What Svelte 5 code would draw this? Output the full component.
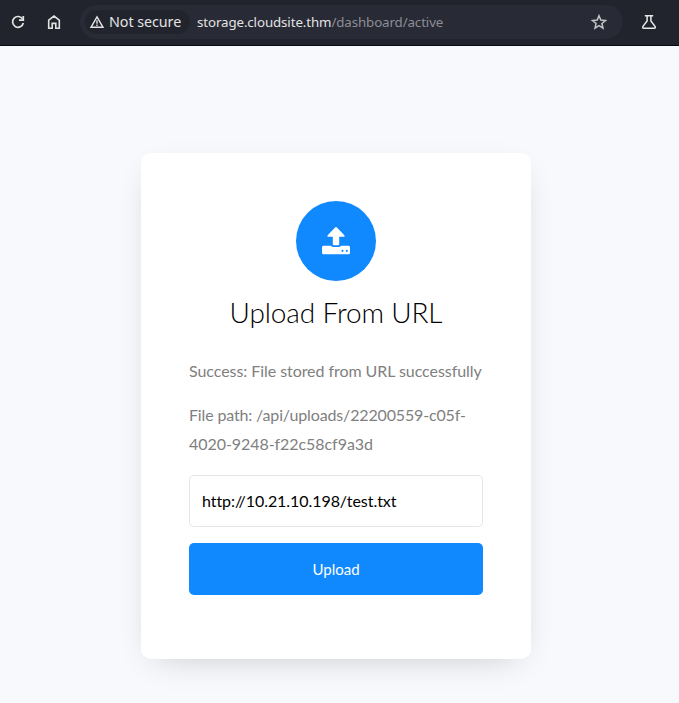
<script>
  let url = $state('http://10.21.10.198/test.txt');
</script>

<div class="page">
  <header class="toolbar">
    <svg class="reload" width="18" height="18" viewBox="0 0 18 18" fill="none" stroke="#e3e3e3" stroke-width="1.7">
      <path d="M13.7 6.2A5.4 5.4 0 1 0 14.3 10" /><path d="M14.3 3v4.2H10" />
    </svg>
    <svg class="home" width="18" height="18" viewBox="0 0 18 18" fill="none" stroke="#e3e3e3" stroke-width="1.6">
      <path d="M3.7 7.1 9 3l5.3 4.1v8.1h-3.5v-4.8H7.2v4.8H3.7z" />
    </svg>
    <div class="omnibox">
      <div class="chip">
        <svg width="16" height="16" viewBox="0 0 16 16" fill="none" stroke="#e3e3e3" stroke-width="1.4">
          <path d="M8 2.8 14 13.3H2z" /><path d="M8 6.3v3.4M8 10.6v1.4" />
        </svg>
        <span>Not secure</span>
      </div>
      <div class="address"><span class="host">storage.cloudsite.thm</span><span class="path">/dashboard/active</span></div>
      <svg class="star" width="18" height="18" viewBox="0 0 18 18" fill="none" stroke="#c4c5c8" stroke-width="1.5">
        <path d="m9 2.8 1.8 4.3 4.7.4-3.6 3 1.1 4.6L9 12.7l-4 2.4 1.1-4.6-3.6-3 4.7-.4z" />
      </svg>
    </div>
    <svg class="flask" width="18" height="18" viewBox="0 0 18 18" fill="none" stroke="#e8e8e8" stroke-width="1.5">
      <path d="M4.8 2.8h8.4M7.1 3v5L3 13.3q-1 1.9.8 1.9h10.4q1.8 0 .8-1.9L10.9 8V3" />
    </svg>
  </header>

  <main>
    <section class="card">
      <div class="icon">
        <svg width="28" height="28" viewBox="0 0 28 28">
          <path fill="#fff" d="M13.1.5q.9-.9 1.8 0l7.2 7.4c.9 1 .4 1.9-.7 1.9H17.2v7.3q0 1.2-1.2 1.2h-4q-1.2 0-1.2-1.2V9.8H6.6c-1.1 0-1.6-.9-.7-1.9z" />
          <path fill="#fff" fill-rule="evenodd" d="M1.5 18.7h7.700q.5 1.3 2 1.3h5.6q1.5 0 2-1.3h7.700q1.5 0 1.5 1.5v5.5q0 1.5-1.5 1.5h-25Q0 27.2 0 25.7v-5.5q0-1.5 1.5-1.5zM20.5 22.8a1.05 1.05 0 1 0 0 2.1 1.05 1.05 0 0 0 0-2.1zM24.8 22.8a1.05 1.05 0 1 0 0 2.1 1.05 1.05 0 0 0 0-2.1z" />
        </svg>
      </div>
      <h1>Upload From URL</h1>
      <p>Success: File stored from URL successfully</p>
      <p class="result">File path: /api/uploads/22200559-c05f-<span>4020-9248-f22c58cf9a3d</span></p>
      <input type="text" bind:value={url} aria-label="URL" />
      <button type="button">Upload</button>
    </section>
  </main>
</div>

<style>
  .page {
    height: 703px;
    overflow: hidden;
    background: #f8f9fd;
    font-family: Lato, "Liberation Sans", sans-serif;
    display: flex;
    flex-direction: column;
  }
  .toolbar {
    box-sizing: border-box;
    height: 46px;
    flex: none;
    background: #22242d;
    border-bottom: 1px solid #08090e;
    display: flex;
    align-items: center;
    font-family: "Noto Sans", sans-serif;
    padding: 0 21px 1px 9px;
  }
  svg { display: block; flex: none; }
  .home { margin-left: 18px; }
  .omnibox {
    margin-left: 17px;
    width: 543px;
    height: 34px;
    border-radius: 17px;
    background: #282a35;
    display: flex;
    align-items: center;
    box-sizing: border-box;
    padding: 0 15px 0 5px;
  }
  .chip {
    box-sizing: border-box;
    width: 105px;
    height: 24px;
    border-radius: 12px;
    background: #22242d;
    color: #e3e3e3;
    display: flex;
    align-items: center;
    gap: 4px;
    padding-left: 4px;
    font-size: 14.3px;
    letter-spacing: -0.05px;
    line-height: 20px;
    white-space: nowrap;
  }
  .address {
    flex: 1;
    margin-left: 7px;
    font-size: 13.3px;
    letter-spacing: -0.1px;
    line-height: 20px;
    white-space: nowrap;
  }
  .host { color: #e3e3e3; }
  .path { color: #8d8e96; }
  .flask { margin-left: 17px; }
  main {
    display: flex;
    justify-content: center;
    padding: 107px 7px 0 0;
  }
  .card {
    box-sizing: border-box;
    width: 390px;
    height: 506px;
    padding: 48px;
    border-radius: 10px;
    background: #fff;
    box-shadow: 0 10px 34px -15px rgba(0, 0, 0, 0.24);
  }
  .icon {
    width: 80px;
    height: 80px;
    margin: 0 auto;
    border-radius: 50%;
    background: #1089ff;
    display: flex;
    align-items: center;
    justify-content: center;
  }
  h1 {
    margin: 10px 0 23.6px;
    font-size: 28px;
    line-height: 42px;
    font-weight: 300;
    letter-spacing: -0.13px;
    text-align: center;
    color: #000;
  }
  p {
    margin: 0 0 16px;
    font-size: 16px;
    line-height: 28.8px;
    letter-spacing: -0.06px;
    color: gray;
  }
  .result { letter-spacing: -0.15px; }
  .result span { letter-spacing: -0.06px; }
  input {
    display: block;
    box-sizing: border-box;
    width: 100%;
    height: 52px;
    margin: 0 0 16px;
    padding: 6px 12px;
    border: 1px solid rgba(0, 0, 0, 0.1);
    border-radius: 5px;
    background: #fff;
    color: #000;
    font: 16px Lato, sans-serif;
    letter-spacing: -0.06px;
    outline: none;
  }
  button {
    display: block;
    width: 100%;
    height: 52px;
    border: 0;
    border-radius: 5px;
    background: #1089ff;
    color: #fff;
    font: 15px Lato, sans-serif;
  }
</style>
